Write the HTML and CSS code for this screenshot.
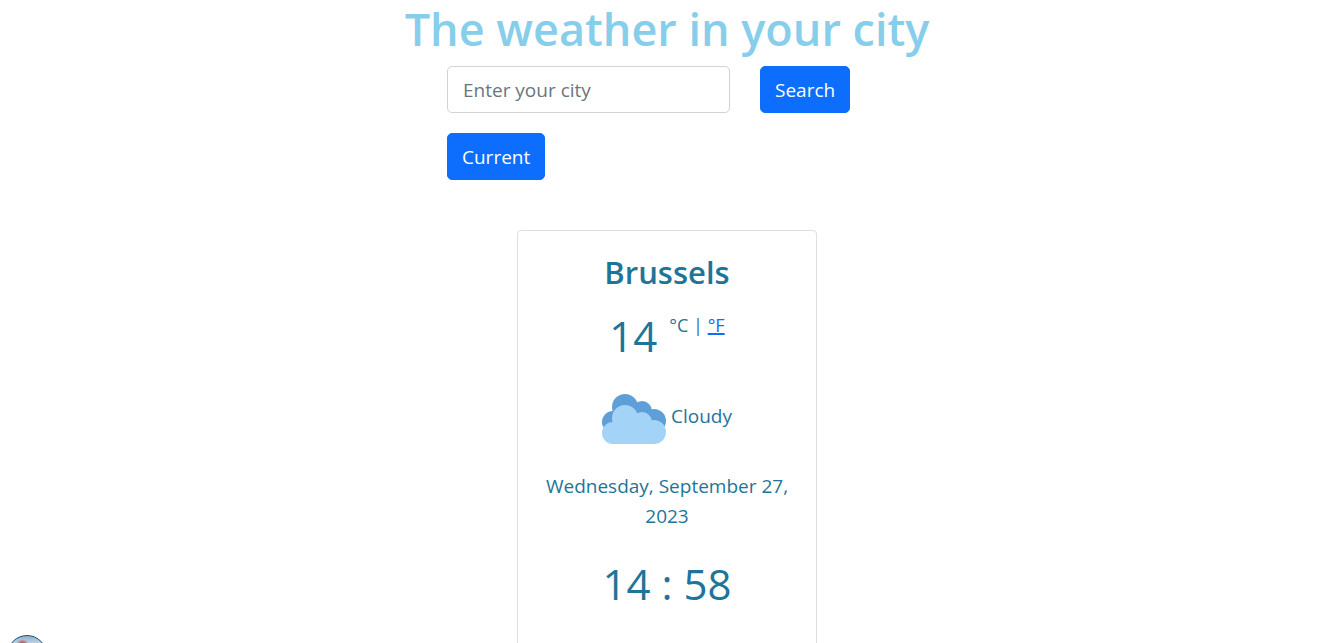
FILE: index.html
```html
<!DOCTYPE html>
<html lang="en">
<head>
<meta charset="utf-8">
<meta name="viewport" content="width=device-width, initial-scale=1">
<title>The weather in your city</title>
<link rel="stylesheet" href="styles.css">
</head>
<body>
<h1 class="title">The weather in your city</h1>
<form class="search">
  <input class="city-input" type="text" placeholder="Enter your city" aria-label="City">
  <button class="btn" type="submit">Search</button>
  <button class="btn" type="button">Current</button>
</form>
<main class="card">
  <h2 class="city">Brussels</h2>
  <div class="temperature">
    <span class="degrees">14</span>
    <span class="units">°C | <a href="#">°F</a></span>
  </div>
  <div class="conditions">
    <svg class="cloud" viewBox="0 0 64 52" aria-hidden="true">
      <g fill="#5f9fd8"><circle cx="23" cy="14" r="13"/><circle cx="40" cy="18" r="10"/><circle cx="52" cy="28" r="12"/><circle cx="11" cy="29" r="11"/><path d="M11 18h40v24H11z"/></g>
      <g fill="#a3d3f7"><circle cx="23" cy="25" r="13"/><circle cx="40" cy="29" r="10"/><circle cx="52" cy="39" r="12"/><circle cx="11" cy="40" r="11"/><path d="M11 30h41v21H11z"/></g>
    </svg>
    <span>Cloudy</span>
  </div>
  <p class="date">Wednesday, September 27, 2023</p>
  <p class="time">14 : 58</p>
</main>
<div class="avatar" aria-hidden="true"></div>
</body>
</html>
```
FILE: styles.css
```css
* { box-sizing: border-box; }
html { scrollbar-width: none; }
body {
  margin: 0;
  padding-right: 4px;
  background: #fff;
  color: #1f7499;
  font: 400 19px/30px "Open Sans", "Noto Sans", sans-serif;
  text-align: center;
}
.title { margin: 0; color: #87ceeb; font-size: 45px; line-height: 58px; font-weight: 600; }
.search { display: grid; grid-template-columns: 283px auto; justify-content: start; justify-items: start; gap: 20px 30px; width: 440px; margin: 8px auto 0; }
.city-input, .btn { height: 47px; padding: 0 15px; border-radius: 5px; font: inherit; }
.city-input { width: 100%; border: 1px solid #ced4da; }
.city-input::placeholder { color: #6c757d; opacity: 1; }
.btn { padding: 0 14px; border: 1px solid #0d6efd; background: #0d6efd; color: #fff; }
.card { width: 300px; margin: 50px auto 0; padding: 20px 24px 48px; border: 1px solid #dfdfdf; border-radius: 4px; }
.city { margin: 0; font-size: 31px; line-height: 42px; font-weight: 600; }
.temperature { display: flex; justify-content: center; gap: 12px; margin-top: 17px; }
.degrees, .time { font-size: 42px; line-height: 52px; }
.units { font-size: 18px; }
.units a, .units a:visited { color: #0d6efd; text-decoration-thickness: 2px; }
.conditions { display: flex; align-items: start; justify-content: center; gap: 5px; margin-top: 31px; }
.conditions span { margin-top: 8px; }
.cloud { width: 64px; height: 52px; }
.date { margin: 26px 0 0; }
.time { margin: 27px 0 0; }
.avatar {
  position: fixed;
  left: 7px;
  bottom: -32px;
  width: 40px;
  height: 40px;
  border: 1px solid #1f4e79;
  border-radius: 50%;
  background: radial-gradient(circle at 38% 27%, #b8443c 3px, transparent 7px), linear-gradient(#8fb0cb, #dbe6ee 30%);
}
```
